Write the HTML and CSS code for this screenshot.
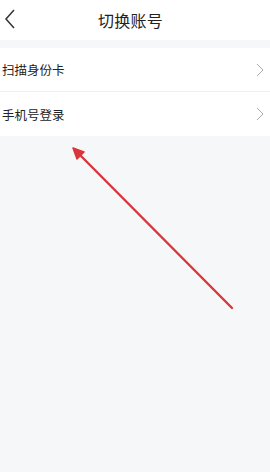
FILE: index.html
```html
<!DOCTYPE html>
<html lang="zh-CN">
<head>
	<meta charset="utf-8">
	<meta name="viewport" content="width=device-width, initial-scale=1.0">
	<title>切换账号</title>
	<link rel="stylesheet" href="styles.css">
</head>
<body>
	<div class="page">
		<div class="header">
			<div class="back">
				<svg width="12" height="20" viewBox="0 0 12 20"><path d="M10 1 L2 10 L10 19" fill="none" stroke="#333" stroke-width="1.5"/></svg>
			</div>
			<div class="title">切换账号</div>
		</div>

		<div class="list">
			<div class="row">
				<span class="label">扫描身份卡</span>
				<svg class="arrow-r" width="8" height="14" viewBox="0 0 8 14"><path d="M1 1 L7 7 L1 13" fill="none" stroke="#aaa" stroke-width="1"/></svg>
			</div>
			<div class="row">
				<span class="label">手机号登录</span>
				<svg class="arrow-r" width="8" height="14" viewBox="0 0 8 14"><path d="M1 1 L7 7 L1 13" fill="none" stroke="#aaa" stroke-width="1"/></svg>
			</div>
		</div>
	</div>

	<!-- annotation arrow -->
	<svg class="mark" width="270" height="472" viewBox="0 0 270 472">
		<line x1="232" y1="308" x2="77" y2="152" stroke="#d8363b" stroke-width="2.4" stroke-linecap="round"/>
		<path d="M73 148 L84 152 L77 159 Z" fill="#d8363b" stroke="#d8363b" stroke-width="1.5" stroke-linejoin="round"/>
	</svg>
</body>
</html>
```

FILE: styles.css
```css
html, body {height:100%;}
body {
	margin: 0;
	background: #f6f7f8;
	color: #333;
	font-family: "Noto Sans CJK SC", "Noto Sans", sans-serif;
}
*, :after, :before {box-sizing: border-box;}

.page {position:relative;}

.header {
	position: relative;
	display: flex;
	align-items: center;
	justify-content: center;
	height: 40px;
	background: #fff;
}
.header .back {
	position: absolute;
	left: 4px;
	top: 9px;
	display: flex;
}
.header .title {font-size:16px;color:#222;letter-spacing:0.3px;margin-right:9px;}

.list {margin-top:8px;background:#fff;}
.list .row {
	display: flex;
	align-items: center;
	justify-content: space-between;
	height: 44px;
	padding: 0 6px 0 2px;
	border-bottom: 1px solid #f0f0f0;
}
.list .row:last-child {border-bottom:0;}
.list .row .label {font-size:12.5px;color:#222;}

.mark {position:absolute;left:0;top:0;pointer-events:none;}
```
